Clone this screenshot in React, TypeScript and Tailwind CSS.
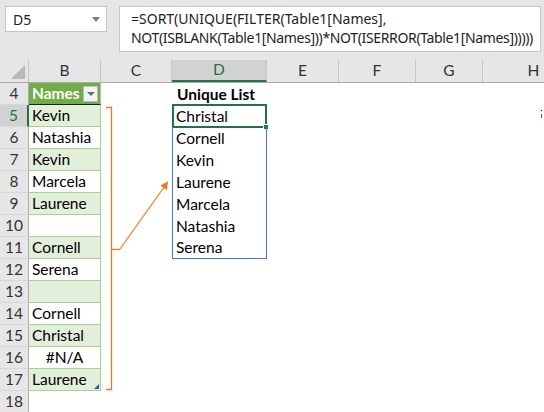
import React from "react";

const cellFont = { fontFamily: "Lato, 'Liberation Sans', sans-serif" };

const names = [
  "Kevin",
  "Natashia",
  "Kevin",
  "Marcela",
  "Laurene",
  "",
  "Cornell",
  "Serena",
  "",
  "Cornell",
  "Christal",
  "#N/A",
  "Laurene",
];

const unique = ["Christal", "Cornell", "Kevin", "Laurene", "Marcela", "Natashia", "Serena"];

const cols = [
  { key: "B", w: "w-[72px]" },
  { key: "C", w: "w-[71px]" },
  { key: "D", w: "w-[95px]" },
  { key: "E", w: "w-[72px]" },
  { key: "F", w: "w-[77px]" },
  { key: "G", w: "w-[67px]" },
  { key: "H", w: "w-[90px]" },
];

const NameCell = ({ row }: { row: number }) => {
  if (row === 4) {
    return (
      <div className="w-[72px] h-full shrink-0 bg-[#70ad47] border-b border-b-[#1f1f1f] border-r border-r-[#a9d08e] flex items-center justify-between pl-[3px] pr-[2px]">
        <span className="text-white font-bold text-[15.5px] pt-[1px]">Names</span>
        <div className="w-[15px] h-[16px] bg-[#f4f4f4] border border-[#bcbcbc] flex items-center justify-center">
          <div className="w-0 h-0 border-l-[4px] border-r-[4px] border-t-[4px] border-l-transparent border-r-transparent border-t-[#6b6b6b]" />
        </div>
      </div>
    );
  }
  if (row > 17) {
    return <div className="w-[72px] h-full shrink-0" />;
  }
  const v = names[row - 5];
  const odd = row % 2 === 1;
  return (
    <div
      className={`relative w-[72px] h-full shrink-0 border-b border-r border-[#a9d08e] flex items-center pt-[1px] text-[15.5px] text-black ${
        odd ? "bg-[#e2efda]" : "bg-white"
      } ${v === "#N/A" ? "justify-center" : "pl-[3px]"}`}
    >
      {v}
      {row === 17 && (
        <div className="absolute right-[1px] bottom-[1px] w-0 h-0 border-l-[5px] border-b-[5px] border-l-transparent border-b-[#3b55a8]" />
      )}
    </div>
  );
};

const UniqueCell = ({ row }: { row: number }) => {
  if (row === 4) {
    return (
      <div className="w-[95px] h-full shrink-0 flex items-center pt-[1px] pl-[5px] font-bold text-[15.5px] text-black">
        Unique List
      </div>
    );
  }
  const i = row - 5;
  if (i < 0 || i >= unique.length) {
    return <div className="w-[95px] h-full shrink-0" />;
  }
  return (
    <div
      className={`relative w-[95px] h-full shrink-0 border-l border-r border-[#4a78c8] flex items-center pt-[1px] pl-[3px] text-[15.5px] text-black ${
        i === unique.length - 1 ? "border-b" : ""
      }`}
    >
      {unique[i]}
      {i === 0 && (
        <div className="absolute -left-[1px] -top-[1px] w-[95px] h-[24px] border-2 border-[#217346]">
          <div className="absolute -right-[4px] -bottom-[4px] w-[6px] h-[6px] bg-[#217346] border border-white" />
        </div>
      )}
    </div>
  );
};

export default function App() {
  const rowNums = Array.from({ length: 15 }, (_, i) => i + 4);
  return (
    <div className="relative w-[544px] h-[412px] overflow-hidden bg-white" style={cellFont}>
      {/* name box + formula bar */}
      <div className="h-[60px] bg-[#e6e6e6] flex items-start pt-[6px] pl-[5px]">
        <div className="w-[102px] h-[26px] bg-white border border-[#c6c6c6] flex items-center justify-between pl-[7px] pr-[6px]">
          <span className="text-[14px] text-[#222]" style={{ fontFamily: "'Noto Sans', sans-serif" }}>
            D5
          </span>
          <div className="w-0 h-0 border-l-[4px] border-r-[4px] border-t-[5px] border-l-transparent border-r-transparent border-t-[#7a7a7a]" />
        </div>
        <div
          className="ml-[12px] w-[422px] h-[46px] bg-white border border-[#c6c6c6] pl-[11px] pt-[2px] text-[14px] leading-[19px] text-[#222] whitespace-nowrap"
          style={{ fontFamily: "'Noto Sans', sans-serif" }}
        >
          <div>=SORT(UNIQUE(FILTER(Table1[Names],</div>
          <div className="tracking-[-0.35px]">NOT(ISBLANK(Table1[Names]))*NOT(ISERROR(Table1[Names])))))</div>
        </div>
      </div>

      {/* column headers */}
      <div className="h-[23px] flex bg-[#e6e6e6] border-b border-[#ababab]">
        <div className="w-[29px] h-full shrink-0 border-r border-[#c6c6c6] flex items-end justify-end pr-[3px] pb-[3px]">
          <div className="w-0 h-0 border-b-[14px] border-l-[14px] border-b-[#b8b8b8] border-l-transparent" />
        </div>
        {cols.map((c) => (
          <div
            key={c.key}
            className={`${c.w} h-full shrink-0 border-r border-[#c6c6c6] flex items-center justify-center text-[15.5px] ${
              c.key === "D" ? "bg-[#d2d2d2] text-[#217346] border-b-2 border-b-[#217346]" : "text-[#333]"
            } ${c.key === "H" ? "pl-[12px]" : ""}`}
          >
            {c.key}
          </div>
        ))}
      </div>

      {/* rows */}
      {rowNums.map((r) => (
        <div key={r} className="h-[22px] flex">
          <div
            className={`w-[29px] h-full shrink-0 border-b border-[#d8d8d8] flex items-center justify-center pt-[1px] text-[15.5px] ${
              r === 5
                ? "bg-[#d2d2d2] text-[#217346] border-r-2 border-r-[#217346]"
                : "bg-[#e6e6e6] text-[#333] border-r border-r-[#ababab]"
            }`}
          >
            {r}
          </div>
          <NameCell row={r} />
          <div className="w-[71px] h-full shrink-0" />
          <UniqueCell row={r} />
          <div className="flex-1 h-full flex justify-end items-center pr-[2px]">
            {r === 5 && (
              <div className="flex flex-col items-center gap-[3px] pb-[4px]">
                <div className="w-[1px] h-[1px] bg-black" />
                <div className="w-[1px] h-[4px] bg-[#3a5fb0]" />
              </div>
            )}
          </div>
        </div>
      ))}

      {/* bracket and arrow drawing */}
      <svg className="absolute left-0 top-0 pointer-events-none" width="544" height="412" viewBox="0 0 544 412">
        <defs>
          <marker id="ah" markerWidth="8" markerHeight="8" refX="6" refY="4" orient="auto" markerUnits="userSpaceOnUse">
            <path d="M0 0 L8 4 L0 8 Z" fill="#f07822" />
          </marker>
        </defs>
        <path d="M106 107.5 H111.5 V389.5 H106" fill="none" stroke="#f07822" strokeWidth="1.3" />
        <path d="M111.5 249.5 H120" fill="none" stroke="#f07822" strokeWidth="1.3" />
        <path d="M120 249 L167 183" fill="none" stroke="#f07822" strokeWidth="1.2" markerEnd="url(#ah)" />
      </svg>
    </div>
  );
}
